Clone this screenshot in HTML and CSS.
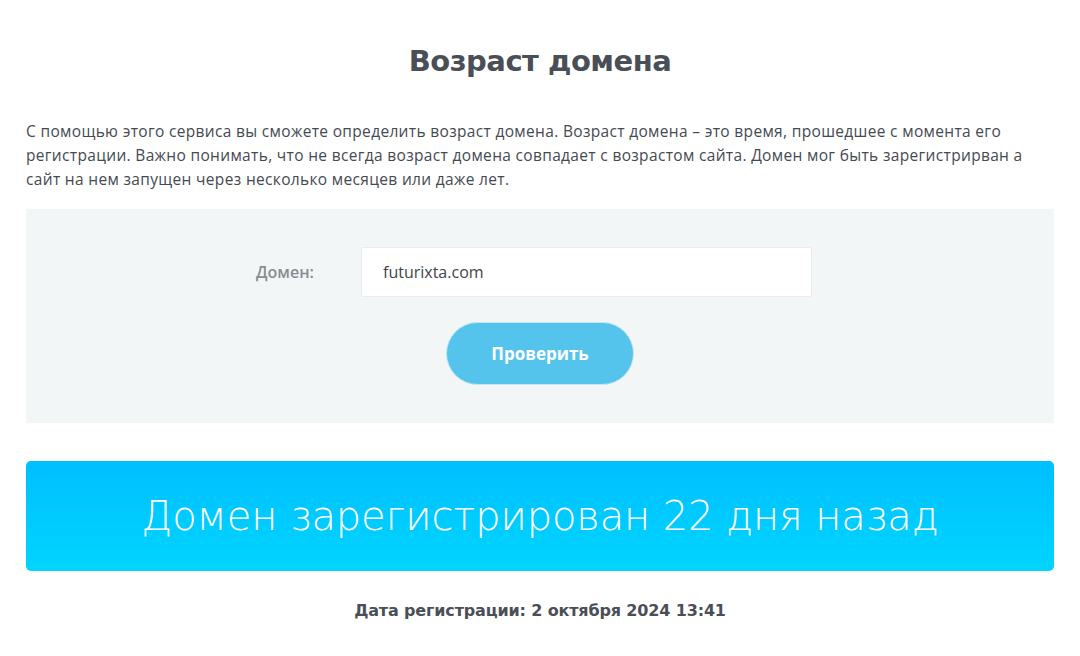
FILE: index.html
```html
<!DOCTYPE html>
<html lang="ru">
<head>
<meta charset="utf-8">
<title>Возраст домена</title>
<link rel="stylesheet" href="styles.css">
</head>
<body>
<main class="page">
  <h1 class="title">Возраст домена</h1>
  <p class="intro">С помощью этого сервиса вы сможете определить возраст домена. Возраст домена – это время, прошедшее с момента его регистрации. Важно понимать, что не всегда возраст домена совпадает с возрастом сайта. Домен мог быть зарегистрирван а сайт на нем запущен через несколько месяцев или даже лет.</p>
  <form class="panel">
    <div class="row">
      <label class="label" for="domain">Домен:</label>
      <input class="input" id="domain" type="text" value="futurixta.com">
    </div>
    <button class="btn" type="button">Проверить</button>
  </form>
  <div class="result">Домен зарегистрирован 22 дня назад</div>
  <p class="date">Дата регистрации: 2 октября 2024 13:41</p>
</main>
</body>
</html>
```
FILE: styles.css
```css
html, body { margin: 0; padding: 0; background: #fff; }
body { font-family: "Open Sans", "Liberation Sans", sans-serif; color: #4a4f57; }
.page { padding: 0 26px; }
.title {
  margin: 0;
  padding-top: 41px;
  font-family: "DejaVu Sans", sans-serif;
  font-weight: bold;
  font-size: 29px;
  line-height: 40px;
  text-align: center;
  color: #4a4f57;
  letter-spacing: -0.5px;
}
.intro {
  margin: 38px 0 0 0;
  font-size: 15.5px;
  font-weight: 500;
  line-height: 24px;
  letter-spacing: 0.33px;
  color: #454a52;
}
.panel {
  margin-top: 18px;
  background: #f2f6f7;
  height: 214px;
  box-sizing: border-box;
  padding-top: 38px;
  display: flex;
  flex-direction: column;
  align-items: center;
}
.row { display: flex; align-items: center; margin-left: -12px; }
.label {
  width: 105px;
  font-size: 16px;
  font-weight: 600;
  color: #8a8c8f;
}
.input {
  width: 451px;
  height: 50px;
  box-sizing: border-box;
  border: 1px solid #e8eced;
  border-radius: 2px;
  background: #fff;
  padding: 0 21px;
  font-family: "Open Sans", sans-serif;
  font-size: 16px;
  font-weight: 500;
  color: #3f444b;
  outline: none;
}
.btn {
  margin-top: 25px;
  width: 188px;
  height: 63px;
  border-radius: 32px;
  border: 1px solid #c6e6f3;
  background: #55c4ed;
  color: #fff;
  font-family: "Open Sans", sans-serif;
  font-weight: bold;
  font-size: 17px;
  cursor: pointer;
}
.result {
  margin-top: 38px;
  height: 110px;
  border-radius: 5px;
  background: linear-gradient(#00bfff, #00d5ff);
  color: #fff;
  display: flex;
  align-items: center;
  justify-content: center;
  font-family: "DejaVu Sans", sans-serif;
  font-weight: 300;
  font-size: 40px;
  letter-spacing: -0.1px;
}
.date {
  margin: 30px 0 0 0;
  text-align: center;
  font-family: "DejaVu Sans", sans-serif;
  font-weight: bold;
  font-size: 16px;
  letter-spacing: -0.15px;
  color: #4a4f57;
}
```
